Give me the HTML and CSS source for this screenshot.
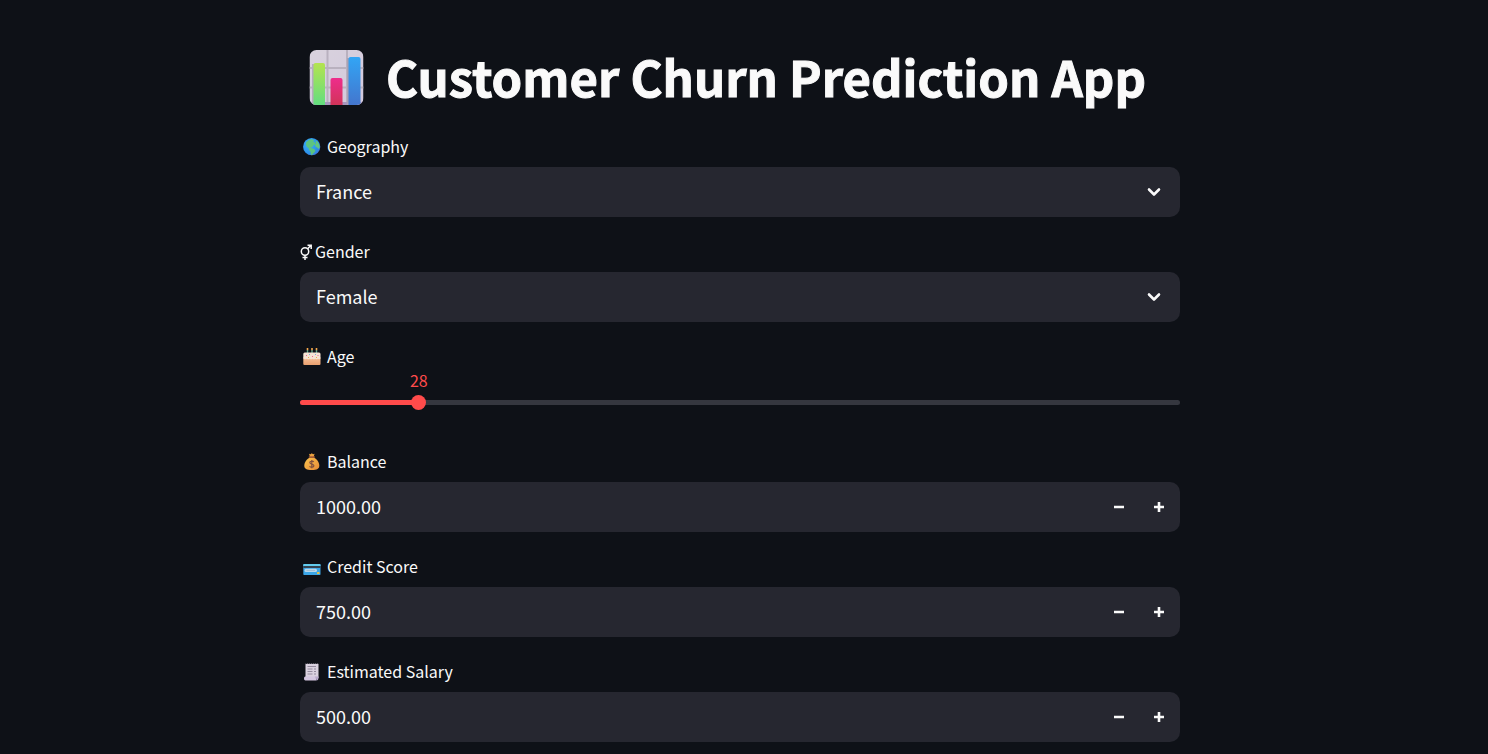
FILE: index.html
```html
<!DOCTYPE html>
<html lang="en">
<head>
<meta charset="utf-8">
<meta name="viewport" content="width=device-width, initial-scale=1">
<title>Customer Churn Prediction App</title>
<link rel="stylesheet" href="styles.css">
</head>
<body>
<main class="page">
  <h1 class="title">
    <svg class="title-icon" viewBox="0 0 54 55" aria-hidden="true">
      <defs>
        <linearGradient id="green" x1="0" y1="0" x2="0" y2="1"><stop offset="0" stop-color="#b4e34f"/><stop offset="1" stop-color="#5fdd82"/></linearGradient>
        <linearGradient id="pink" x1="0" y1="0" x2="0" y2="1"><stop offset="0" stop-color="#ee2d8c"/><stop offset="1" stop-color="#cf3455"/></linearGradient>
        <linearGradient id="blue" x1="0" y1="0" x2="0" y2="1"><stop offset="0" stop-color="#32a5f5"/><stop offset="1" stop-color="#4474cc"/></linearGradient>
        <linearGradient id="paper" x1="0" y1="0" x2="1" y2="1"><stop offset="0" stop-color="#d9d2dd"/><stop offset="1" stop-color="#d2c9dd"/></linearGradient>
        <clipPath id="tile"><rect width="54" height="55" rx="7"/></clipPath>
      </defs>
      <g clip-path="url(#tile)">
        <rect width="54" height="55" fill="url(#paper)"/>
        <path d="M18 0v55M37.500 0v55M0 18h54M0 37.500h54" stroke="#b9b1bf" stroke-width="2"/>
        <path d="M0 53.500h54" stroke="#a796bd" stroke-width="3"/>
        <rect x="2.500" y="14" width="2" height="41" fill="#b5acbd"/>
        <rect x="4" y="13" width="11.500" height="44" rx="2" fill="url(#green)"/>
        <rect x="21" y="28" width="12" height="29" rx="2" fill="url(#pink)"/>
        <rect x="37.500" y="8" width="3" height="47" fill="#aaa1b3"/>
        <rect x="39" y="7" width="12" height="50" rx="2" fill="url(#blue)"/>
      </g>
    </svg>
    <span class="title-text">Customer Churn Prediction App</span>
  </h1>

  <form class="form">
    <div class="field">
      <label class="label" for="geography">
        <svg class="icon" viewBox="0 0 18 18" aria-hidden="true">
          <defs><radialGradient id="sea" cx=".35" cy=".35" r=".75"><stop offset="0" stop-color="#3fb2f4"/><stop offset=".7" stop-color="#2c91ea"/><stop offset="1" stop-color="#4276dc"/></radialGradient></defs>
          <circle cx="8.700" cy="8.700" r="8.600" fill="url(#sea)"/>
          <path d="M3 4.500C4.500 2.600 6.500 1.500 9 1.300l2 .9-.9 1.500 1.700.6.500 2-2 1.200-1.200 1.700-1.800.4 1.500.7 2.400.8 1.200 1.500-1 1.900-1.500 1.200-.9 1.600-1.100-.9-.3-2.600-1.600-1.700-.2-1.700-2-1.700-.8-1.800z" fill="#5cc481"/>
          <path d="M12.500 2.600l2 .9 1.600 2.500.7 3.200-1.200 1.700-1.500-1.400-1.400-.7-.8-2 1-1.700z" fill="#62c57f"/>
        </svg>
        <span class="label-text">Geography</span>
      </label>
      <div class="box">
        <select class="control" id="geography"><option>France</option><option>Germany</option><option>Spain</option></select>
        <svg class="chevron" viewBox="0 0 14 10" aria-hidden="true"><path d="M2 2.500l5 5 5-5"/></svg>
      </div>
    </div>

    <div class="field">
      <label class="label label-glyph" for="gender">
        <svg class="icon-gender" viewBox="0 0 12 18" aria-hidden="true"><circle cx="5" cy="8.500" r="3.700"/><path d="M5 12.200v4.800M2.500 14.500h5M7.700 5.700l3-3.200M7.500 2.200h3.700v3.700"/></svg>
        <span class="label-text">Gender</span>
      </label>
      <div class="box">
        <select class="control" id="gender"><option>Female</option><option>Male</option></select>
        <svg class="chevron" viewBox="0 0 14 10" aria-hidden="true"><path d="M2 2.500l5 5 5-5"/></svg>
      </div>
    </div>

    <div class="field">
      <label class="label" for="age">
        <svg class="icon" viewBox="0 0 18 18" aria-hidden="true">
          <defs><linearGradient id="cake" x1="0" y1="0" x2="0" y2="1"><stop offset="0" stop-color="#f6c29b"/><stop offset="1" stop-color="#e9a06f"/></linearGradient></defs>
          <path d="M4.500 2v4M9 2v4M13.500 2v4" stroke="#55a08c" stroke-width="1.400"/>
          <path d="M4.500 0v2.200M9 0v2.200M13.500 0v2.200" stroke="#f6a94d" stroke-width="1.600"/>
          <rect x=".3" y="9" width="17.200" height="8" rx="1" fill="url(#cake)"/>
          <path d="M.3 6q0-1.500 1.500-1.500H16q1.500 0 1.500 1.500v4.500q-1.200 1.200-2.500.2-1.300 1.200-2.700 0-1.400 1.200-2.800 0-1.400 1.200-2.800 0-1.400 1.200-2.800 0-1.400 1-3.600-.2z" fill="#f6e4d4"/>
          <path d="M3 7.500h1M9 8.500h1M14.500 7.500h1" stroke="#eb6692"/><path d="M6 6.500h1M12 6.500h1" stroke="#79a9dc"/><path d="M5 9.500h1M13 9.500h1" stroke="#e6b34b"/>
        </svg>
        <span class="label-text">Age</span>
      </label>
      <div class="slider">
        <output class="slider-value" for="age" style="left: 13.5%">28</output>
        <div class="slider-track"><div class="slider-fill" style="width: 13.5%"></div></div>
        <input class="slider-input" id="age" type="range" min="18" max="92" value="28">
      </div>
    </div>

    <div class="field">
      <label class="label" for="balance">
        <svg class="icon" viewBox="0 0 18 18" aria-hidden="true">
          <defs><linearGradient id="bag" x1="0" y1="0" x2="1" y2="1"><stop offset="0" stop-color="#fbc44d"/><stop offset="1" stop-color="#e58a38"/></linearGradient></defs>
          <path d="M6 .8l1.500.5L8.800.2l1.300 1.100 1.500-.5-1 3.200H7z" fill="#e9a13f"/>
          <path d="M6.800 4.500h4c3.300 1.600 5.500 5 5.500 8.300 0 2.900-2.200 4.200-7.500 4.200s-7.500-1.300-7.500-4.200c0-3.300 2.200-6.700 5.500-8.300z" fill="url(#bag)"/>
          <path d="M6.300 4h5" stroke="#a95b37" stroke-width="1.300" stroke-linecap="round"/>
          <path d="M10.800 8.800C10 7.900 6.800 7.900 6.800 9.600c0 1.900 4.100 1.200 4.100 3.100 0 1.800-3.400 1.700-4.400.6M8.800 7v8.200" fill="none" stroke="#81503f" stroke-width="1.200"/>
        </svg>
        <span class="label-text">Balance</span>
      </label>
      <div class="box">
        <input class="control" id="balance" type="text" inputmode="decimal" value="1000.00">
        <div class="steps">
          <button class="step" type="button" aria-label="Decrease balance"><svg viewBox="0 0 12 12" aria-hidden="true"><path d="M1 6h10"/></svg></button>
          <button class="step" type="button" aria-label="Increase balance"><svg viewBox="0 0 12 12" aria-hidden="true"><path d="M1 6h10M6 1v10"/></svg></button>
        </div>
      </div>
    </div>

    <div class="field">
      <label class="label" for="credit">
        <svg class="icon" viewBox="0 0 18 18" aria-hidden="true">
          <rect x=".3" y="6" width="17.200" height="11" rx=".7" fill="#3ba6e8"/>
          <path d="M.3 7q0-1 1-1h15.200q1 0 1 1v1H.3z" fill="#62cbed"/>
          <path d="M.3 9h17.200" stroke="#344351" stroke-width="2"/>
          <rect x="1.500" y="10.800" width="12.500" height="3.200" rx="1.500" fill="#b9d8ec"/>
          <path d="M3.500 12.400h8.500" stroke="#9fbdd1"/>
          <rect x="14" y="14" width="2.500" height="2" rx=".5" fill="#e6c14b"/>
        </svg>
        <span class="label-text">Credit Score</span>
      </label>
      <div class="box">
        <input class="control" id="credit" type="text" inputmode="decimal" value="750.00">
        <div class="steps">
          <button class="step" type="button" aria-label="Decrease credit score"><svg viewBox="0 0 12 12" aria-hidden="true"><path d="M1 6h10"/></svg></button>
          <button class="step" type="button" aria-label="Increase credit score"><svg viewBox="0 0 12 12" aria-hidden="true"><path d="M1 6h10M6 1v10"/></svg></button>
        </div>
      </div>
    </div>

    <div class="field">
      <label class="label" for="salary">
        <svg class="icon" viewBox="0 0 18 18" aria-hidden="true">
          <path d="M2.500.6l1 .5 1-.5 1 .5 1-.5 1 .5 1-.5 1 .5 1-.5 1 .5 1-.5 1 .5 1-.5 1 .3V15H2.500z" fill="#d9d1df"/>
          <path d="M4.500 3.500h8.500M4.500 6h5M11 6h2M4.500 8.500h5M11 8.500h2M4.500 11h5M11 11h2" stroke="#938a9d"/>
          <path d="M2.200 13.500h9.500q1.500.5 1.500 4H2.400Q1 17.300 1 15.500t1.200-2z" fill="#d3c6e0"/>
          <path d="M11.700 13.500h3.800v2q0 1.800-2.300 2.100 .3-2.100-1.500-4.100z" fill="#b7a8ca"/>
        </svg>
        <span class="label-text">Estimated Salary</span>
      </label>
      <div class="box">
        <input class="control" id="salary" type="text" inputmode="decimal" value="500.00">
        <div class="steps">
          <button class="step" type="button" aria-label="Decrease estimated salary"><svg viewBox="0 0 12 12" aria-hidden="true"><path d="M1 6h10"/></svg></button>
          <button class="step" type="button" aria-label="Increase estimated salary"><svg viewBox="0 0 12 12" aria-hidden="true"><path d="M1 6h10M6 1v10"/></svg></button>
        </div>
      </div>
    </div>
  </form>
</main>
</body>
</html>
```
FILE: styles.css
```css
* { box-sizing: border-box; }

body {
  margin: 0;
  padding: 0 8px 0 0;
  background: #0e1117;
  color: #fafafa;
  font-family: "Noto Sans CJK JP", "Noto Sans", sans-serif;
}

.page {
  max-width: 880px;
  margin: 0 auto;
  padding: 43px 0 12px;
}

.title {
  display: flex;
  align-items: center;
  gap: 22px;
  height: 68px;
  margin: 0 0 21px;
  padding-left: 9px;
  font-size: 49px;
  font-weight: 700;
  line-height: 66px;
  white-space: nowrap;
  -webkit-text-stroke: 1px #fafafa;
}

.title-icon { flex: none; width: 55px; height: 55px; }

.title-text { padding-bottom: 2px; }

.form { display: flex; flex-direction: column; gap: 20px; }

.field { display: flex; flex-direction: column; gap: 5px; }

.label {
  display: flex;
  align-items: center;
  gap: 6px;
  height: 30px;
  padding-left: 3px;
  font-size: 16px;
  line-height: 28px;
}

.label-text { padding-bottom: 2px; }

.label-glyph { gap: 3px; padding-left: 0; }

.icon { width: 18px; height: 18px; }

.icon-gender {
  width: 12px;
  height: 18px;
  fill: none;
  stroke: #fafafa;
  stroke-width: 1.5;
}

.box {
  position: relative;
  display: flex;
  height: 50px;
  border-radius: 10px;
  background: #262730;
  overflow: hidden;
}

.control {
  flex: 1;
  min-width: 0;
  padding: 0 16px 3px;
  border: 0;
  outline: 0;
  background: transparent;
  color: inherit;
  font: inherit;
  font-size: 18px;
  line-height: 28px;
  appearance: none;
}

.control option { background: #262730; }

.chevron {
  position: absolute;
  top: 20px;
  right: 19px;
  width: 14px;
  height: 10px;
  fill: none;
  stroke: #fafafa;
  stroke-width: 2.6;
  stroke-linecap: round;
  stroke-linejoin: round;
  pointer-events: none;
}

.steps { display: flex; padding-right: 1px; }

.step {
  display: flex;
  align-items: center;
  justify-content: center;
  width: 40px;
  padding: 0;
  border: 0;
  background: transparent;
}

.step svg {
  width: 12px;
  height: 12px;
  stroke: #fafafa;
  stroke-width: 2.6;
}

.slider { position: relative; height: 50px; padding-top: 23px; }

.slider-value {
  position: absolute;
  top: -9px;
  transform: translateX(-50%);
  color: #ff4b4b;
  font-size: 16px;
  line-height: 24px;
}

.slider-track {
  height: 5px;
  border-radius: 3px;
  background: #35373f;
  overflow: hidden;
}

.slider-fill { height: 100%; background: #ff4b4b; }

.slider-input {
  position: absolute;
  top: 18px;
  left: -8px;
  width: calc(100% + 15px);
  height: 15px;
  margin: 0;
  background: transparent;
  appearance: none;
}

.slider-input::-webkit-slider-thumb {
  width: 15px;
  height: 15px;
  border-radius: 50%;
  background: #ff4b4b;
  appearance: none;
}
```
